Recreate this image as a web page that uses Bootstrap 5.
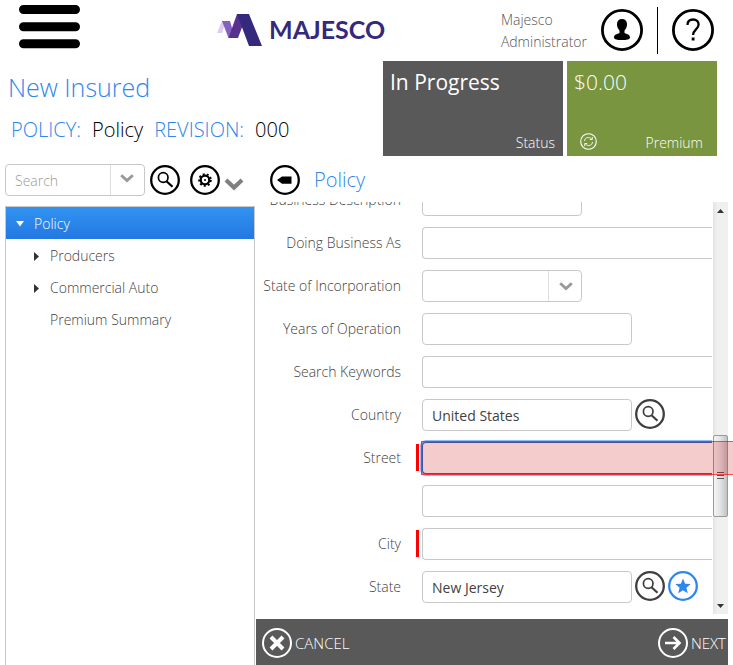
<!DOCTYPE html>
<html lang="en">
<head>
<meta charset="utf-8">
<meta name="viewport" content="width=device-width, initial-scale=1">
<title>New Insured - Policy</title>
<link href="https://cdn.jsdelivr.net/npm/bootstrap@5.3.0/dist/css/bootstrap.min.css" rel="stylesheet">
<style>
  :root { --sky: #2d87ee; --slate: #595959; --line: #c8c8c8; --ink: #3f3f3f; }
  body { font-family: "Open Sans", "Noto Sans", sans-serif; font-weight: 300; font-size: 14px; line-height: 22px; color: var(--ink); background: #fff; }
  button { font-weight: inherit; }
  svg { display: block; }
  .plain-btn { background: none; border: 0; padding: 0; color: inherit; flex: none; }
  .top-bar { padding: 0 19px; height: 61px; flex: none; }
  .menu-btn { margin-top: 5px; }
  .brand { margin: 13px 0 0 137px; color: #35297d; text-decoration: none; gap: 6px; }
  .brand-name { font-family: Lato, sans-serif; font-weight: 700; font-size: 25px; line-height: 32px; }
  .user-box { margin-top: 7px; gap: 14px; color: #000; }
  .user-name { color: #555; padding-top: 2px; }
  .round-lg { padding-top: 2px; }
  .rule { width: 1px; height: 47px; background: #000; }
  .title-band { padding-right: 16px; flex: none; }
  .heading { font-size: 25px; line-height: 34px; font-weight: 300; color: var(--sky); padding: 9px 0 0 8px; margin: 0; }
  .sub-heading { font-size: 20px; line-height: 28px; padding: 12px 0 0 11px; gap: 11px; color: #000; }
  .sub-heading .key, .pane-title { color: var(--sky); }
  .tile { height: 95px; color: #fff; }
  .tile-big { font-size: 21px; line-height: 28px; padding: 7px 7px 0; }
  .tile-status { width: 180px; background: var(--slate); }
  .tile-status .tile-big { font-weight: 400; }
  .tile-premium { width: 150px; background: #799540; }
  .tile-small { padding: 0 8px 2px; }
  .tile-premium .tile-small { padding: 0 14px 2px 13px; }
  .tile-premium button { padding-bottom: 4px; }
  .side { width: 256px; flex: none; padding-left: 5px; }
  .side-tools { padding: 8px 0 10px; color: #000; }
  .search-combo { width: 140px; height: 32px; border: 1px solid var(--line); border-radius: 4px; margin-right: 5px; }
  .search-combo input { border: 0; outline: 0; min-width: 0; padding: 2px 9px 0; background: none; font-weight: 300; }
  .search-combo input::placeholder { color: #999; opacity: 1; }
  .combo-drop { width: 34px; border-left: 1px solid #ddd; color: #999; padding: 0 1px 4px 0; }
  .gear-btn { margin-left: 10px; gap: 4px; }
  .tree { border: 1px solid var(--line); border-bottom: 0; margin-right: 1px; }
  .tree a { height: 32px; color: var(--ink); text-decoration: none; padding: 2px 9px 0 28px; gap: 11px; }
  .tree a.current { color: #fff; padding-left: 9px; gap: 9px; background: linear-gradient(#3293f1, #2378e2); }
  .tree a.leaf { padding-left: 44px; }
  .pane-head { height: 46px; padding: 9px 0 7px 14px; gap: 14px; color: #000; flex: none; }
  .pane-title { font-size: 20px; line-height: 28px; font-weight: 300; margin: 0; }
  .scroll-area { padding-right: 5px; }
  .form-rows { gap: 11px; padding-bottom: 12px; }
  .form-line { height: 32px; }
  .form-line > label, .label-space { width: 145px; flex: none; text-align: right; white-space: nowrap; }
  .form-line > label + *, .label-space + * { margin-left: 21px; }
  .must-fill::before { content: ""; align-self: flex-start; margin-top: 2px; width: 3px; height: 27px; background: #f00; order: 1; }
  .must-fill > label { order: 0; margin-right: 15px; }
  .must-fill > label + * { order: 2; margin-left: 3px; }
  .field { height: 32px; border: 1px solid var(--line); border-radius: 4px; padding: 0 9px; color: var(--ink); font-weight: 400; background: #fff; outline: 0; min-width: 0; }
  .field-open { flex: 1; border-right: 0; border-radius: 4px 0 0 4px; margin-right: 1px; }
  .field-sm { width: 160px; }
  .field-md { width: 210px; margin-right: 3px; }
  .field-focus { border-color: #2b62c4; box-shadow: 0 0 0 2px #8fbdf2; clip-path: inset(-2px 0 -2px -2px); }
  .round-sm { padding-bottom: 2px; }
  .pick { height: 32px; }
  select.field { appearance: none; }
  .pick-mark { right: 0; top: 1px; bottom: 1px; width: 34px; border-left: 1px solid #ddd; color: #999; pointer-events: none; }
  .error-veil { left: 165px; right: -20px; top: -1px; bottom: -1px; border: 1px solid rgba(255, 0, 0, .7); border-right: 0; background: rgba(204, 0, 0, .2); background-clip: padding-box; pointer-events: none; z-index: 2; }
  .icon-gap { margin-right: 3px; }
  .v-scroll { width: 15px; background: linear-gradient(90deg, #e3e3e3, #f0f0f0 30%); margin-bottom: 1px; padding: 7px 0 6px; color: #333; }
  .v-above { flex: 222; }
  .v-below { flex: 87; }
  .v-thumb { width: 15px; height: 82px; flex: none; border: 1px solid #999; border-radius: 2px; background: linear-gradient(90deg, #f5f5f5, #e5e5e7 45%, #c0c2c7); }
  .pane-foot { height: 46px; margin: 4px 5px 0 0; padding: 2px 2px 0 6px; background: var(--slate); color: #fff; flex: none; }
  .pane-foot button { gap: 3px; font-weight: 300; font-size: 15px; }
</style>
<script src="https://cdn.jsdelivr.net/npm/bootstrap@5.3.0/dist/js/bootstrap.bundle.min.js"></script>
</head>
<body>
<svg width="0" height="0" class="position-absolute" aria-hidden="true">
  <symbol id="lens" viewBox="0 0 30 30"><circle cx="15" cy="15" r="13.8" fill="none" stroke="currentColor" stroke-width="2.3"/><circle cx="13.2" cy="12.5" r="4.8" fill="none" stroke="currentColor" stroke-width="1.7"/><path d="M16.5 16.2l6 5.6" stroke="currentColor" stroke-width="2.2"/></symbol>
  <symbol id="chev" viewBox="0 0 14 9"><path d="M1.2 1.3L7 6.600l5.800-5.300" fill="none" stroke="currentColor" stroke-width="2.900"/></symbol>
</svg>
<div class="d-flex flex-column vh-100 overflow-hidden">
  <header class="top-bar d-flex align-items-start">
    <button class="plain-btn menu-btn" type="button" aria-label="Menu"><svg width="61" height="44" viewBox="0 0 61 44"><path d="M4.500 4.500h52M4.500 21.700h52M4.500 38.800h52" stroke="#000" stroke-width="9" stroke-linecap="round"/></svg></button>
    <a class="brand d-flex" href="#" aria-label="Majesco home">
      <svg width="46" height="34" viewBox="0 0 46 34"><path d="M0 20L5 8h4L5 20z" fill="#dcccf2"/><path d="M5 8h8l5 17h-6.500z" fill="#8560c0"/><path d="M11.500 25L20 1h10l-9 24z" fill="#58318f"/><path d="M20 1h12l13 32H32z" fill="#35297d"/></svg>
      <span class="brand-name">MAJESCO</span>
    </a>
    <div class="user-box d-flex ms-auto align-items-start">
      <div class="user-name">Majesco<br>Administrator</div>
      <button class="plain-btn round-lg" type="button" aria-label="User"><svg width="42" height="42" viewBox="0 0 42 42"><circle cx="21" cy="21" r="19.600" fill="none" stroke="#000" stroke-width="2.800"/><path d="M21 10c3.200 0 5 2 5 5.300 0 2.600-1.200 5-2.500 6.200v2.500c2.500 1.300 5.500 1.500 5.500 4.500 0 2-3.500 2.500-8 2.500s-8-.5-8-2.500c0-3 3-3.200 5.500-4.500v-2.500C17.200 20.300 16 17.900 16 15.300 16 12 17.800 10 21 10z"/></svg></button>
      <div class="rule"></div>
      <button class="plain-btn round-lg" type="button" aria-label="Help"><svg width="42" height="42" viewBox="0 0 42 42"><circle cx="21" cy="21" r="19.600" fill="none" stroke="#000" stroke-width="2.800"/><path d="M15.500 16c0-3.500 2.300-5.500 5.600-5.500s5.500 2 5.500 5c0 4.800-5.500 5-5.500 10.500" fill="none" stroke="#000" stroke-width="2.300"/><path d="M19.700 28.500h2.800v3h-2.800z"/></svg></button>
    </div>
  </header>

  <div class="title-band d-flex">
    <div class="flex-grow-1">
      <h1 class="heading">New Insured</h1>
      <div class="sub-heading d-flex"><span class="key">POLICY:</span><span>Policy</span><span class="key">REVISION:</span><span>000</span></div>
    </div>
    <div class="d-flex gap-1">
      <div class="tile tile-status d-flex flex-column justify-content-between"><div class="tile-big">In Progress</div><div class="tile-small text-end">Status</div></div>
      <div class="tile tile-premium d-flex flex-column justify-content-between"><div class="tile-big">$0.00</div>
        <div class="tile-small d-flex justify-content-between align-items-center"><button class="plain-btn" type="button" aria-label="Refresh premium"><svg width="17" height="17" viewBox="0 0 17 17" fill="none" stroke="#fff"><circle cx="8.500" cy="8.500" r="7.800" stroke-width="1.100"/><path d="M4.500 8C4.700 4.200 9.300 3.500 11.600 6M12.500 9c-.2 3.800-4.800 4.500-7.100 2M12.300 4v2.500H9.800M4.700 13v-2.500h2.500" stroke-width=".9"/></svg></button><span>Premium</span></div>
      </div>
    </div>
  </div>

  <div class="d-flex flex-grow-1 overflow-hidden">
    <aside class="side d-flex flex-column">
      <div class="side-tools d-flex align-items-center">
        <div class="search-combo d-flex"><input class="w-100" type="text" placeholder="Search" aria-label="Search"><button class="plain-btn combo-drop d-flex align-items-center justify-content-center" type="button" aria-label="Search options"><svg width="14" height="9"><use href="#chev"/></svg></button></div>
        <button class="plain-btn" type="button" aria-label="Run search"><svg width="30" height="30"><use href="#lens"/></svg></button>
        <button class="plain-btn gear-btn d-flex align-items-center" type="button" aria-label="Settings">
          <svg width="30" height="30" viewBox="0 0 30 30" fill="none" stroke="#000"><circle cx="15" cy="15" r="13.800" stroke-width="2.300"/><circle cx="15" cy="15" r="4.300" stroke-width="2.300"/><circle cx="15" cy="15" r="5.900" stroke-width="1.800" stroke-dasharray="2.060 2.060"/><circle cx="15" cy="15" r="1" fill="#000" stroke="none"/></svg>
          <svg width="20" height="13" viewBox="0 0 20 13" class="mt-2"><path d="M2 2l8 7.500L18 2" fill="none" stroke="#808080" stroke-width="4.200"/></svg>
        </button>
      </div>
      <nav class="tree flex-grow-1" aria-label="Policy sections">
        <a class="current d-flex align-items-center" href="#"><svg width="10" height="6" viewBox="0 0 10 6"><path d="M1 0h8L5 5.500z" fill="#fff"/></svg>Policy</a>
        <a class="d-flex align-items-center" href="#"><svg width="5" height="9" viewBox="0 0 5 9"><path d="M0 0l5 4.500L0 9z" fill="#333"/></svg>Producers</a>
        <a class="d-flex align-items-center" href="#"><svg width="5" height="9" viewBox="0 0 5 9"><path d="M0 0l5 4.500L0 9z" fill="#333"/></svg>Commercial Auto</a>
        <a class="leaf d-flex align-items-center" href="#">Premium Summary</a>
      </nav>
    </aside>

    <main class="d-flex flex-column flex-grow-1 overflow-hidden">
      <div class="pane-head d-flex align-items-center">
        <button class="plain-btn" type="button" aria-label="Back"><svg width="30" height="30" viewBox="0 0 30 30"><circle cx="15" cy="15" r="13.800" fill="none" stroke="#000" stroke-width="2.300"/><path d="M7 15l5-3.600h9.500v7.300H12z"/></svg></button>
        <h2 class="pane-title">Policy</h2>
      </div>
      <div class="scroll-area d-flex flex-grow-1 overflow-hidden">
        <form class="form-rows d-flex flex-column flex-grow-1 align-self-end">
          <div class="form-line d-flex align-items-center"><label for="desc">Business Description</label><input class="field field-sm" id="desc" type="text"></div>
          <div class="form-line d-flex align-items-center"><label for="dba">Doing Business As</label><input class="field field-open" id="dba" type="text"></div>
          <div class="form-line d-flex align-items-center"><label for="inc">State of Incorporation</label><div class="pick position-relative"><select class="field field-sm" id="inc"><option></option></select><span class="pick-mark position-absolute d-flex align-items-center justify-content-center"><svg width="14" height="9"><use href="#chev"/></svg></span></div></div>
          <div class="form-line d-flex align-items-center"><label for="years">Years of Operation</label><input class="field field-md" id="years" type="text"></div>
          <div class="form-line d-flex align-items-center"><label for="keys">Search Keywords</label><input class="field field-open" id="keys" type="text"></div>
          <div class="form-line d-flex align-items-center"><label for="country">Country</label><input class="field field-md" id="country" type="text" value="United States"><button class="plain-btn round-sm" type="button" aria-label="Find country"><svg width="30" height="30"><use href="#lens"/></svg></button></div>
          <div class="form-line must-fill d-flex align-items-center position-relative"><label for="street">Street</label><input class="field field-open field-focus" id="street" type="text"><span class="error-veil position-absolute order-3"></span></div>
          <div class="form-line d-flex align-items-center"><span class="label-space"></span><input class="field field-open" type="text" aria-label="Street line 2"></div>
          <div class="form-line must-fill d-flex align-items-center"><label for="city">City</label><input class="field field-open" id="city" type="text"></div>
          <div class="form-line d-flex align-items-center"><label for="state">State</label><input class="field field-md" id="state" type="text" value="New Jersey"><button class="plain-btn round-sm icon-gap" type="button" aria-label="Find state"><svg width="30" height="30"><use href="#lens"/></svg></button><button class="plain-btn round-sm" type="button" aria-label="Favorite"><svg width="30" height="30" viewBox="0 0 30 30"><circle cx="15" cy="15" r="13.800" fill="none" stroke="#2d87ee" stroke-width="2.300"/><path d="M15 7.500l2.100 5.200 5.600.4-4.300 3.600 1.400 5.500-4.800-3-4.800 3 1.400-5.500-4.300-3.600 5.600-.4z" fill="#2d87ee"/></svg></button></div>
        </form>
        <div class="v-scroll d-flex flex-column align-items-center" aria-hidden="true">
          <svg width="7" height="4" viewBox="0 0 7 4"><path d="M0 4l3.500-4L7 4z" fill="#333"/></svg>
          <div class="v-above"></div>
          <div class="v-thumb d-flex align-items-center justify-content-center"><svg width="7" height="8" viewBox="0 0 7 8"><path d="M0 .5h7M0 3.500h7M0 6.500h7" stroke="#555"/></svg></div>
          <div class="v-below"></div>
          <svg width="7" height="4" viewBox="0 0 7 4"><path d="M0 0h7L3.500 4z" fill="#333"/></svg>
        </div>
      </div>
      <footer class="pane-foot d-flex align-items-center justify-content-between">
        <button class="plain-btn d-flex align-items-center" type="button"><svg width="30" height="30" viewBox="0 0 30 30" fill="none" stroke="#fff"><circle cx="15" cy="15" r="14" stroke-width="2"/><path d="M9 9l12 12M21 9L9 21" stroke-width="4"/></svg>CANCEL</button>
        <button class="plain-btn d-flex align-items-center" type="button"><svg width="30" height="30" viewBox="0 0 30 30" fill="none" stroke="#fff"><circle cx="15" cy="15" r="14" stroke-width="2"/><path d="M7 15h14M15.500 9l6 6-6 6" stroke-width="2.600"/></svg>NEXT</button>
      </footer>
    </main>
  </div>
</div>
</body>
</html>
